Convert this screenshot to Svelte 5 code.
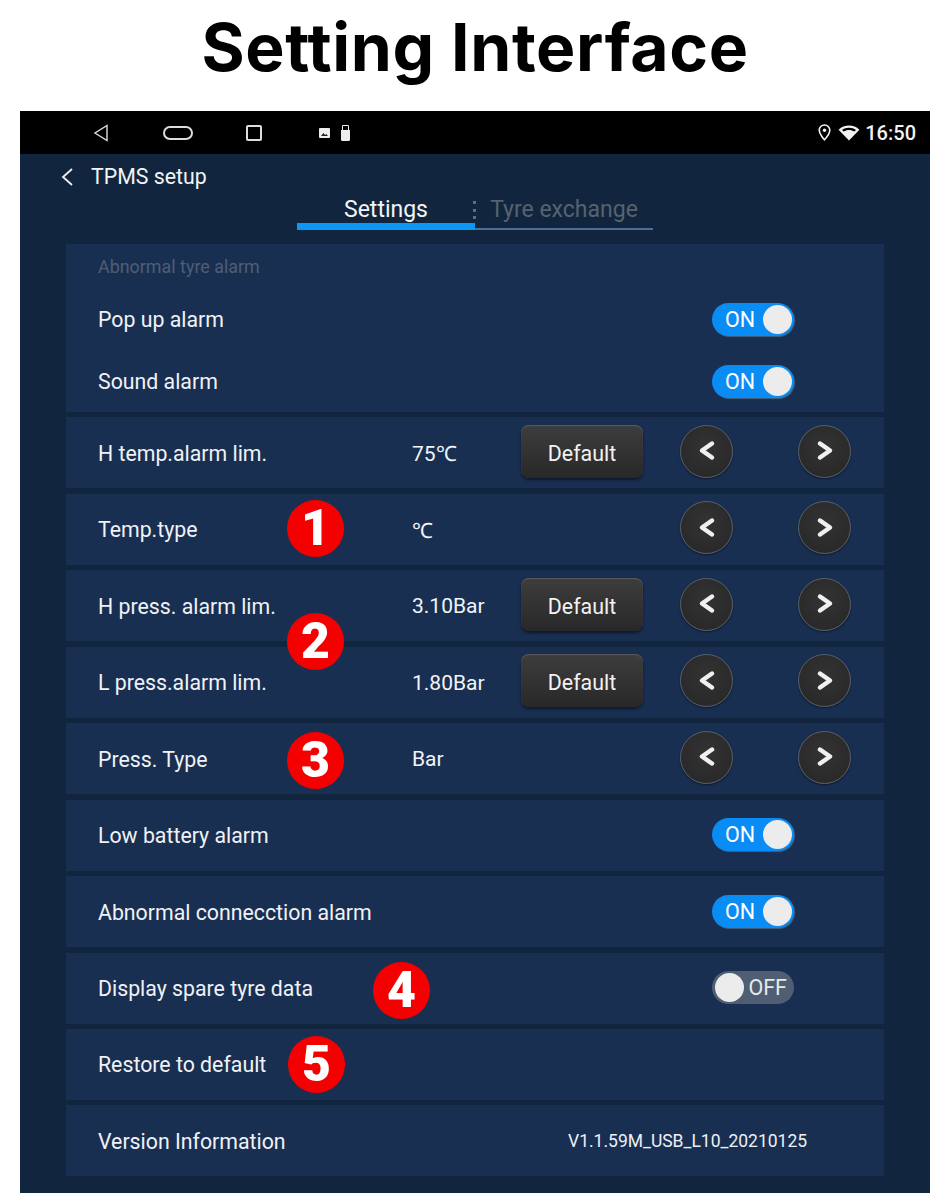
<script lang="ts">
  type Row = { label: string; value?: string; version?: string; def?: boolean; arrows?: boolean; toggle?: boolean; };

  const rows: Row[] = [
    { label: "H temp.alarm lim.", value: "75℃", def: true, arrows: true },
    { label: "Temp.type", value: "℃", arrows: true },
    { label: "H press. alarm lim.", value: "3.10Bar", def: true, arrows: true },
    { label: "L press.alarm lim.", value: "1.80Bar", def: true, arrows: true },
    { label: "Press. Type", value: "Bar", arrows: true },
    { label: "Low battery alarm", toggle: true },
    { label: "Abnormal connecction alarm", toggle: true },
    { label: "Display spare tyre data", toggle: false },
    { label: "Restore to default" },
    { label: "Version Information", version: "V1.1.59M_USB_L10_20210125" },
  ];

  const markers = [
    { n: 1, cls: "m1" },
    { n: 2, cls: "m2" },
    { n: 3, cls: "m3" },
    { n: 4, cls: "m4" },
    { n: 5, cls: "m5" },
  ];
</script>

{#snippet sw(on: boolean)}
  <div class="switch" class:on>
    {#if on}
      <span class="sw-text">ON</span><span class="knob"></span>
    {:else}
      <span class="knob"></span><span class="sw-text">OFF</span>
    {/if}
  </div>
{/snippet}

{#snippet arrow(dir: "left" | "right")}
  <button class="round" aria-label={dir}>
    <svg width="22" height="24" viewBox="0 0 22 24">
      {#if dir === "left"}
        <path d="M16 4.500 6 11.500l10 7" />
      {:else}
        <path d="M6 4.500l10 7-10 7" />
      {/if}
    </svg>
  </button>
{/snippet}

<div class="page">
  <h1>Setting Interface</h1>

  <div class="screen">
    <div class="statusbar">
      <svg class="nav-back" width="16" height="18" viewBox="0 0 16 18"><path d="M14 1.500v15L2 9z" /></svg>
      <span class="nav-home"></span>
      <span class="nav-recent"></span>
      <svg class="note-img" width="11" height="10" viewBox="0 0 11 10"><rect width="11" height="10" rx="1" fill="#eee" /><path d="M2 8l2.400-3 1.600 2 1.200-1L9 8z" fill="#222" /></svg>
      <svg class="note-usb" width="11" height="16" viewBox="0 0 11 16"><path d="M2.500.500h6v5h-6z" fill="none" stroke="#eee" stroke-width="1" /><path d="M1 5h9v9.500a1.500 1.500 0 0 1-1.500 1.500h-6A1.500 1.500 0 0 1 1 14.500z" fill="#eee" /></svg>
      <div class="status-right">
        <svg width="13" height="17" viewBox="0 0 13 17"><path d="M6.500 1a5.300 5.300 0 0 0-5.300 5.300C1.200 10 6.500 15.800 6.500 15.800s5.300-5.800 5.300-9.500A5.300 5.300 0 0 0 6.500 1z" fill="none" stroke="#f2f2f2" stroke-width="1.600" /><circle cx="6.500" cy="6.300" r="1.700" fill="#f2f2f2" /></svg>
        <svg class="wifi" width="22" height="16" viewBox="0 0 22 16"><path d="M11 15.500.6 4.700C3.500 2 7 .6 11 .6s7.500 1.400 10.400 4.100z" fill="#f2f2f2" /><path d="M4 4.900C6 3.500 8.400 2.700 11 2.700s5 .8 7 2.200l-1.700 1.700C14.800 5.600 13 5 11 5s-3.800.6-5.300 1.600z" fill="#000" /></svg>
        <span class="clock">16:50</span>
      </div>
    </div>

    <div class="titlebar">
      <svg width="14" height="20" viewBox="0 0 14 20"><path d="M12 2 3 10l9 8" /></svg>
      <span>TPMS setup</span>
    </div>

    <div class="tabs">
      <div class="tab active">Settings</div>
      <div class="tab-dots"><i></i><i></i><i></i></div>
      <div class="tab">Tyre exchange</div>
    </div>

    <div class="list">
      <section class="block">
        <div class="section-label">Abnormal tyre alarm</div>
        <div class="block-row"><span class="label">Pop up alarm</span>{@render sw(true)}</div>
        <div class="block-row"><span class="label">Sound alarm</span>{@render sw(true)}</div>
      </section>

      {#each rows as r}
        <div class="row">
          <span class="label">{r.label}</span>
          {#if r.version}
            <span class="version">{r.version}</span>
          {:else}
            <span class="value">{r.value ?? ""}</span>
            <span class="def-cell">
              {#if r.def}<button class="default">Default</button>{/if}
            </span>
            {#if r.arrows}
              <div class="arrows">
                {@render arrow("left")}
                {@render arrow("right")}
              </div>
            {:else if r.toggle !== undefined}
              <div class="toggle-cell">{@render sw(r.toggle)}</div>
            {/if}
          {/if}
        </div>
      {/each}
    </div>

    {#each markers as m}
      <div class="marker {m.cls}">{m.n}</div>
    {/each}
  </div>
</div>

<style>
  :global(body) {
    margin: 0;
    background: #fff;
  }

  .page {
    width: 950px;
    height: 1202px;
    overflow: hidden;
    font-family: Roboto, "Liberation Sans", sans-serif;
  }

  h1 {
    margin: 0;
    height: 111px;
    box-sizing: border-box;
    padding-top: 7px;
    text-align: center;
    font-family: Inter, "Liberation Sans", sans-serif;
    font-weight: 700;
    font-size: 66px;
    line-height: 80px;
    letter-spacing: 0.600px;
    color: #000;
  }

  .screen {
    position: relative;
    width: 910px;
    height: 1082px;
    margin-left: 20px;
    background: #11263e;
    color: #f2f4f6;
  }

  /* ── Status bar ── */
  .statusbar {
    display: flex;
    align-items: center;
    height: 43px;
    background: #000;
    padding-left: 73px;
    padding-right: 14px;
    box-sizing: border-box;
  }
  .nav-back { fill: none; stroke: #ddd; stroke-width: 1.400; }
  .nav-home {
    width: 26px;
    height: 10px;
    margin-left: 54px;
    border: 2px solid #ddd;
    border-radius: 8px;
  }
  .nav-recent {
    width: 12px;
    height: 12px;
    margin-left: 53px;
    border: 2px solid #ddd;
    border-radius: 2px;
  }
  .note-img { margin-left: 57px; }
  .note-usb { margin-left: 10px; }
  .status-right {
    display: flex;
    align-items: center;
    margin-left: auto;
  }
  .wifi { margin-left: 7px; }
  .clock {
    margin-left: 5px;
    font-size: 20px;
    font-weight: 500;
    color: #f2f2f2;
  }

  /* ── Title and tabs ── */
  .titlebar {
    display: flex;
    align-items: center;
    gap: 17px;
    height: 46px;
    padding-left: 40px;
    font-size: 21.300px;
    line-height: 46px;
  }
  .titlebar svg { fill: none; stroke: #eef0f3; stroke-width: 1.800; }

  .tabs {
    position: relative;
    display: flex;
    width: 356px;
    height: 30px;
    margin-left: 277px;
  }
  .tab {
    flex: 1;
    height: 30px;
    box-sizing: border-box;
    text-align: center;
    font-size: 23px;
    line-height: 20px;
    color: #56626f;
    border-bottom: 2px solid #4c6f93;
  }
  .tab.active {
    color: #f2f4f6;
    border-bottom: 7px solid #0b97f2;
  }
  .tab-dots {
    position: absolute;
    left: 176px;
    top: 1px;
    display: flex;
    flex-direction: column;
    gap: 4.500px;
  }
  .tab-dots i {
    width: 3px;
    height: 3px;
    background: #56708c;
  }

  /* ── Rows ── */
  .list {
    display: flex;
    flex-direction: column;
    gap: 5.440px;
    width: 818px;
    margin: 14px 0 0 46px;
  }
  .block {
    height: 168px;
    box-sizing: border-box;
    padding: 13px 32px 0;
    background: #192f52;
  }
  .section-label {
    height: 20px;
    margin-bottom: 11px;
    font-size: 17.900px;
    line-height: 20px;
    color: #4f5e73;
  }
  .block-row {
    display: flex;
    align-items: center;
    justify-content: space-between;
    height: 62px;
    padding-right: 58px;
  }

  .row {
    display: grid;
    grid-template-columns: 314px 109px 122px 1fr;
    align-items: center;
    height: 71px;
    box-sizing: border-box;
    padding: 0 32px;
    background: #192f52;
  }
  .label {
    font-size: 21.300px;
    color: #f0f2f5;
  }
  .row .label { padding-top: 1px; }
  .value {
    font-size: 21px;
    padding-top: 1px;
  }

  .def-cell { display: flex; margin-top: -3px; }
  .default {
    width: 122px;
    height: 53px;
    padding: 4px 0 0;
    border: none;
    border-radius: 8px;
    background: linear-gradient(#3d3d3d, #282828);
    box-shadow: 0 2px 3px rgba(0, 0, 0, 0.5), inset 0 1px 1px #5a5a5a;
    color: #f2f2f2;
    font-family: inherit;
    font-size: 21.400px;
  }

  .arrows {
    display: flex;
    gap: 65px;
    margin-top: -3px;
    padding-left: 37px;
  }
  .round {
    display: flex;
    align-items: center;
    justify-content: center;
    width: 53px;
    height: 53px;
    padding: 0;
    border: 1.500px solid #5b6068;
    border-radius: 50%;
    background: radial-gradient(circle at 50% 40%, #333, #262626);
    box-shadow: 0 1px 2px rgba(0, 0, 0, 0.5);
  }
  .round svg { fill: none; stroke: #f0f0f0; stroke-width: 4.500; stroke-linecap: round; stroke-linejoin: round; }

  .toggle-cell { padding-left: 69px; margin-top: -1px; }
  .switch {
    display: flex;
    align-items: center;
    justify-content: space-between;
    width: 82px;
    height: 33px;
    box-sizing: border-box;
    border-radius: 17px;
    background: #505e73;
    font-size: 21.500px;
    color: #e8e8e8;
  }
  .switch:not(.on) { padding: 0 7px 0 3px; }
  .switch.on {
    padding: 0 2px 0 13px;
    background: #0a8cf5;
    color: #fff;
    box-shadow: 1px 1px 1px rgba(90, 130, 170, 0.6);
  }
  .knob {
    width: 29px;
    height: 29px;
    border-radius: 50%;
    background: #ececec;
  }

  .version {
    grid-column: 2 / -1;
    padding-left: 156px;
    font-size: 17.500px;
    white-space: nowrap;
    color: #eef0f3;
  }

  /* ── Numbered callouts laid over the rows ── */
  .marker {
    position: absolute;
    width: 57px;
    height: 57px;
    border-radius: 50%;
    background: #f50000;
    color: #fff;
    text-align: center;
    font-family: Roboto, sans-serif;
    font-weight: 900;
    font-size: 50px;
    line-height: 57px;
  }
  .m1 { left: 267px; top: 389px; }
  .m2 { left: 267px; top: 502px; }
  .m3 { left: 267px; top: 621px; }
  .m4 { left: 353px; top: 851px; }
  .m5 { left: 268px; top: 925px; }
</style>
